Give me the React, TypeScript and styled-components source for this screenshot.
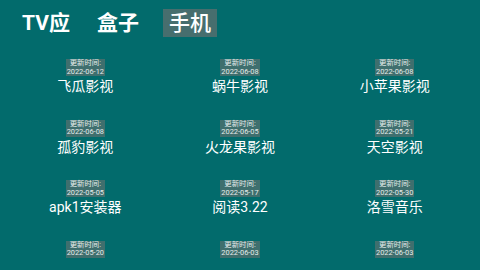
import React from "react";
import styled, { createGlobalStyle } from "styled-components";

const Global = createGlobalStyle`
  html, body {
    margin: 0;
    padding: 0;
    background: #026b6c;
  }
  body {
    font-family: Roboto, "Noto Sans CJK SC", sans-serif;
    color: #ffffff;
    overflow: hidden;
  }
`;

const Page = styled.div`
  width: 480px;
  height: 270px;
  background: #026b6c;
  overflow: hidden;
`;

const TabBar = styled.div`
  display: flex;
  align-items: center;
  padding: 9px 0 0 16px;
  height: 28px;
`;

const Tab = styled.div<{ $active?: boolean; $gap: number }>`
  height: 28px;
  line-height: 28px;
  padding: 0 6px;
  margin-right: ${(p) => p.$gap}px;
  font-size: 21px;
  font-weight: ${(p) => (p.$active ? 500 : 700)};
  color: #ffffff;
  background: ${(p) => (p.$active ? "#476e6e" : "transparent")};
`;

const Grid = styled.div`
  display: grid;
  grid-template-columns: repeat(3, 1fr);
  grid-auto-rows: 60.5px;
  padding: 22px 8px 0 8px;
`;

const Cell = styled.div`
  display: flex;
  flex-direction: column;
  align-items: center;
`;

const Badge = styled.div`
  background: #3f6f6e;
  color: #e4ecea;
  font-size: 7.4px;
  line-height: 8.6px;
  padding: 0 1px;
  text-align: center;
  white-space: nowrap;
`;

const Name = styled.div`
  margin-top: 2px;
  font-size: 14px;
  line-height: 17px;
  color: #ffffff;
  white-space: nowrap;
`;

const items = [
  { name: "飞瓜影视", date: "2022-06-12" },
  { name: "蜗牛影视", date: "2022-06-08" },
  { name: "小苹果影视", date: "2022-06-08" },
  { name: "孤豹影视", date: "2022-06-08" },
  { name: "火龙果影视", date: "2022-06-05" },
  { name: "天空影视", date: "2022-05-21" },
  { name: "apk1安装器", date: "2022-05-05" },
  { name: "阅读3.22", date: "2022-05-17" },
  { name: "洛雪音乐", date: "2022-05-30" },
  { name: "", date: "2022-05-20" },
  { name: "", date: "2022-06-03" },
  { name: "", date: "2022-06-03" },
];

export default function App() {
  return (
    <Page>
      <Global />
      <TabBar>
        <Tab $gap={15}>TV应</Tab>
        <Tab $gap={18}>盒子</Tab>
        <Tab $gap={0} $active>
          手机
        </Tab>
      </TabBar>
      <Grid>
        {items.map((it, i) => (
          <Cell key={i}>
            <Badge>
              更新时间:
              <br />
              {it.date}
            </Badge>
            {it.name && <Name>{it.name}</Name>}
          </Cell>
        ))}
      </Grid>
    </Page>
  );
}
